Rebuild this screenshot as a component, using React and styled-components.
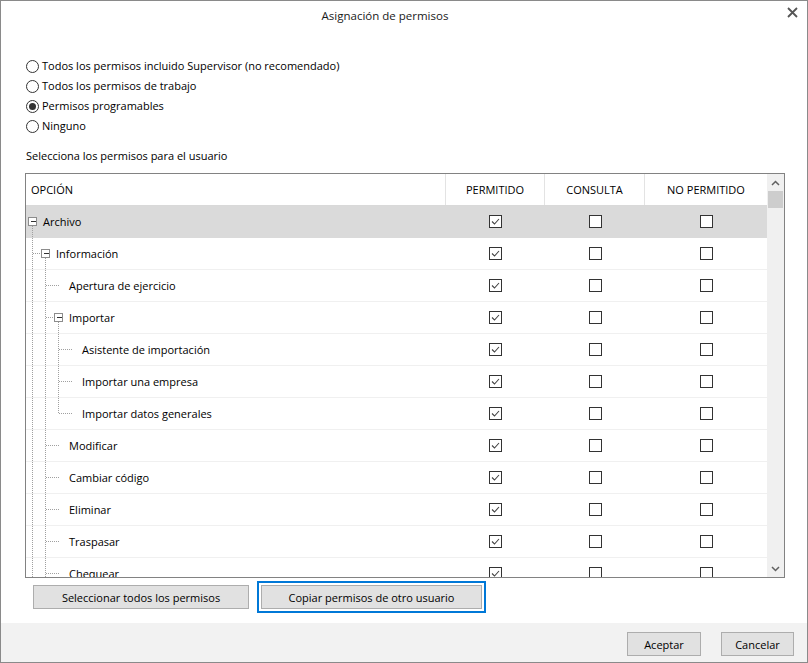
import React from "react";
import styled, { createGlobalStyle } from "styled-components";

const GlobalStyle = createGlobalStyle`
  html, body { margin: 0; padding: 0; background: #fff; }
  body { font-family: "Open Sans", "Noto Sans", sans-serif; font-size: 11px; color: #000; }
  * { box-sizing: border-box; }
`;

const Window = styled.div`
  width: 808px;
  height: 663px;
  border: 1px solid #8a8a8a;
  background: #fff;
  display: flex;
  flex-direction: column;
`;

const TitleBar = styled.div`
  height: 32px;
  display: flex;
  align-items: flex-start;
`;

const Title = styled.div`
  flex: 1;
  text-align: center;
  padding: 7px 8px 0 0;
  font-size: 11.5px;
  line-height: 16px;
  color: #1a1a1a;
`;

const CloseBtn = styled.div`
  width: 30px;
  height: 32px;
  display: flex;
  justify-content: center;
  padding-top: 6px;
`;

const Content = styled.div`
  padding: 23px 22px 0 24px;
  display: flex;
  flex-direction: column;
`;

const RadioGroup = styled.div`
  display: flex;
  flex-direction: column;
  padding-left: 1px;
`;

const RadioRow = styled.label`
  height: 20px;
  display: flex;
  align-items: center;
  gap: 3px;
  line-height: 20px;
`;

const RadioCircle = styled.span`
  width: 13px;
  height: 13px;
  border-radius: 50%;
  border: 1px solid #333;
  display: flex;
  align-items: center;
  justify-content: center;
  &::after {
    content: "";
    width: 7px;
    height: 7px;
    border-radius: 50%;
    background: ${(p) => (p.$on ? "#333" : "transparent")};
  }
`;

const Caption = styled.div`
  margin-top: 10px;
  height: 20px;
  line-height: 20px;
  padding-left: 1px;
`;

const Table = styled.div`
  margin-top: 7px;
  height: 405px;
  border: 1px solid #828282;
  display: flex;
  overflow: hidden;
`;

const Grid = styled.div`
  flex: 1;
  display: flex;
  flex-direction: column;
  overflow: hidden;
`;

const cols = "420px 99px 100px 1fr";

const HeaderRow = styled.div`
  display: grid;
  grid-template-columns: ${cols};
  height: 32px;
  flex: none;
  border-bottom: 1px solid #d9d9d9;
`;

const HeaderCell = styled.div`
  display: flex;
  align-items: center;
  justify-content: ${(p) => (p.$left ? "flex-start" : "center")};
  padding-left: ${(p) => (p.$left ? "5px" : "0")};
  border-right: ${(p) => (p.$last ? "none" : "1px solid #e3e3e3")};
  text-transform: uppercase;
`;

const Row = styled.div`
  display: grid;
  grid-template-columns: ${cols};
  height: 32px;
  flex: none;
  background: ${(p) => (p.$selected ? "#dadada" : "#fff")};
  box-shadow: inset 0 -1px 0 ${(p) => (p.$selected ? "#dadada" : "#f0f0f0")};
`;

const TreeCell = styled.div`
  display: flex;
  align-items: center;
  white-space: nowrap;
  & > svg { flex: none; }
`;

const Label = styled.span`
  line-height: 32px;
`;

const CheckCell = styled.div`
  display: flex;
  align-items: center;
  justify-content: center;
  padding-bottom: 2px;
  padding-left: ${(p) => p.$shift || 0}px;
`;

const Box = styled.span`
  width: 13px;
  height: 13px;
  border: 1px solid #333;
  background: #fff;
  display: flex;
  align-items: center;
  justify-content: center;
`;

const ScrollBar = styled.div`
  width: 17px;
  flex: none;
  background: #f0f0f0;
  display: flex;
  flex-direction: column;
  align-items: center;
`;

const ArrowBtn = styled.div`
  height: 17px;
  width: 17px;
  display: flex;
  align-items: center;
  justify-content: center;
  flex: none;
`;

const Thumb = styled.div`
  width: 15px;
  height: 17px;
  background: #cdcdcd;
  flex: none;
`;

const Track = styled.div`
  flex: 1;
`;

const ActionRow = styled.div`
  display: flex;
  gap: 12px;
  padding: 7px 0 0 8px;
`;

const Button = styled.button`
  font: inherit;
  color: #000;
  height: 24px;
  width: ${(p) => p.$w}px;
  background: #e1e1e1;
  border: 1px solid #adadad;
  padding: 0;
  cursor: default;
  outline: ${(p) => (p.$focus ? "2px solid #0078d7" : "none")};
  outline-offset: 2px;
`;

const Footer = styled.div`
  margin-top: auto;
  height: 39px;
  background: #f2f2f2;
  display: flex;
  justify-content: flex-end;
  align-items: flex-start;
  gap: 20px;
  padding: 9px 13px 0 0;
`;

const DOT = "#a0a0a0";
const step = 13;
const xl = (a) => 6 + step * a + 0.5;

function Connector({ level, box, guides = [], last }) {
  const w = 17 + step * level;
  const parts = [];
  guides.forEach((g, a) => {
    if (g) parts.push(<line key={"g" + a} x1={xl(a)} y1={0} x2={xl(a)} y2={32} />);
  });
  if (level > 0) {
    const px = xl(level - 1);
    parts.push(<line key="pv" x1={px} y1={0} x2={px} y2={last ? 15.5 : 32} />);
    const end = box ? xl(level) - 4 : xl(level) + 1;
    parts.push(<line key="ph" x1={px} y1={15.5} x2={end} y2={15.5} />);
  }
  if (box) {
    parts.push(<line key="bv" x1={xl(level)} y1={20} x2={xl(level)} y2={32} />);
  }
  return (
    <svg width={w} height={32}>
      <g stroke={DOT} strokeDasharray="1 1" shapeRendering="crispEdges">{parts}</g>
      {box && (
        <g shapeRendering="crispEdges">
          <rect x={xl(level) - 4} y={11.5} width={8} height={8} fill="#fff" stroke="#8c8c8c" />
          <line x1={xl(level) - 2} y1={15.5} x2={xl(level) + 3} y2={15.5} stroke="#333" />
        </g>
      )}
    </svg>
  );
}

const Check = ({ on }) => (
  <Box>
    {on && (
      <svg width="11" height="11" viewBox="0 0 11 11">
        <polyline points="2,5.5 4.5,8 9,3" fill="none" stroke="#444" strokeWidth="1.1" />
      </svg>
    )}
  </Box>
);

const rows = [
  { label: "Archivo", level: 0, box: true, selected: true },
  { label: "Información", level: 1, box: true },
  { label: "Apertura de ejercicio", level: 2, guides: [true] },
  { label: "Importar", level: 2, box: true, guides: [true] },
  { label: "Asistente de importación", level: 3, guides: [true, true] },
  { label: "Importar una empresa", level: 3, guides: [true, true] },
  { label: "Importar datos generales", level: 3, guides: [true, true], last: true },
  { label: "Modificar", level: 2, guides: [true] },
  { label: "Cambiar código", level: 2, guides: [true] },
  { label: "Eliminar", level: 2, guides: [true] },
  { label: "Traspasar", level: 2, guides: [true] },
  { label: "Chequear", level: 2, guides: [true] },
];

const options = [
  "Todos los permisos incluido Supervisor (no recomendado)",
  "Todos los permisos de trabajo",
  "Permisos programables",
  "Ninguno",
];

export default function App() {
  return (
    <>
      <GlobalStyle />
      <Window>
        <TitleBar>
          <Title>Asignación de permisos</Title>
          <CloseBtn>
            <svg width="11" height="11" viewBox="0 0 11 11">
              <path d="M1 1 L10 10 M10 1 L1 10" stroke="#555" strokeWidth="1.8" />
            </svg>
          </CloseBtn>
        </TitleBar>
        <Content>
          <RadioGroup>
            {options.map((o, i) => (
              <RadioRow key={o}>
                <RadioCircle $on={i === 2} />
                {o}
              </RadioRow>
            ))}
          </RadioGroup>
          <Caption>Selecciona los permisos para el usuario</Caption>
          <Table>
            <Grid>
              <HeaderRow>
                <HeaderCell $left>Opción</HeaderCell>
                <HeaderCell>Permitido</HeaderCell>
                <HeaderCell>Consulta</HeaderCell>
                <HeaderCell $last>No permitido</HeaderCell>
              </HeaderRow>
              {rows.map((r) => (
                <Row key={r.label} $selected={r.selected}>
                  <TreeCell>
                    <Connector {...r} />
                    <Label>{r.label}</Label>
                  </TreeCell>
                  <CheckCell>
                    <Check on />
                  </CheckCell>
                  <CheckCell>
                    <Check />
                  </CheckCell>
                  <CheckCell $shift={1}>
                    <Check />
                  </CheckCell>
                </Row>
              ))}
            </Grid>
            <ScrollBar>
              <ArrowBtn>
                <svg width="9" height="6" viewBox="0 0 9 6">
                  <polyline points="1,5 4.5,1.5 8,5" fill="none" stroke="#606060" strokeWidth="1.5" />
                </svg>
              </ArrowBtn>
              <Thumb />
              <Track />
              <ArrowBtn>
                <svg width="9" height="6" viewBox="0 0 9 6">
                  <polyline points="1,1 4.5,4.5 8,1" fill="none" stroke="#606060" strokeWidth="1.5" />
                </svg>
              </ArrowBtn>
            </ScrollBar>
          </Table>
          <ActionRow>
            <Button $w={216}>Seleccionar todos los permisos</Button>
            <Button $w={221} $focus>Copiar permisos de otro usuario</Button>
          </ActionRow>
        </Content>
        <Footer>
          <Button $w={74}>Aceptar</Button>
          <Button $w={73}>Cancelar</Button>
        </Footer>
      </Window>
    </>
  );
}
